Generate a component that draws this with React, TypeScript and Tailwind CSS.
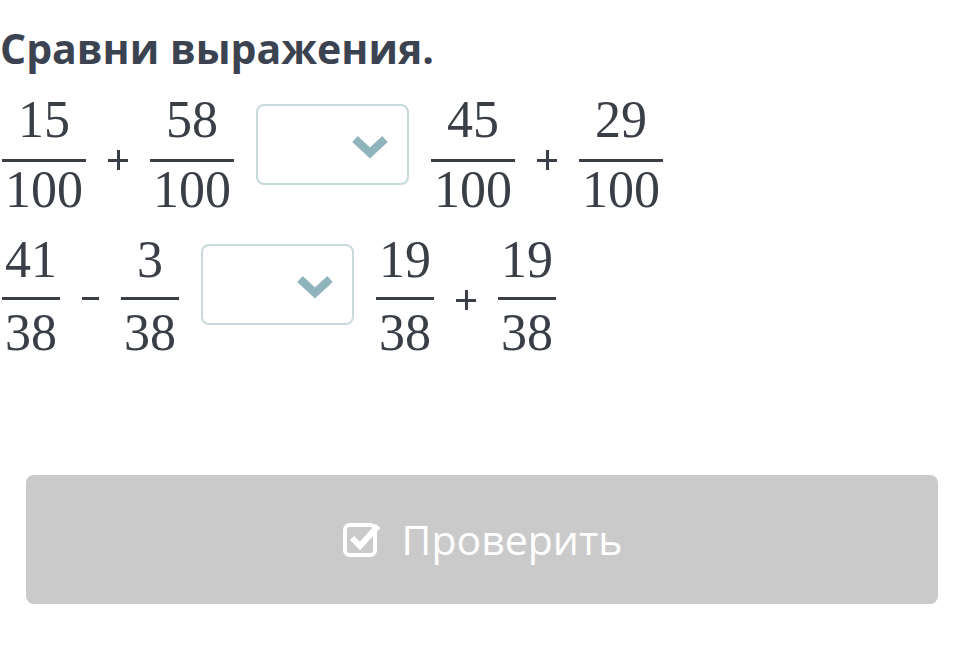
import React from "react";

function Frac({ n, d, numMb = 13, denMt = 2 }: { n: string; d: string; numMb?: number; denMt?: number }) {
  return (
    <div className="flex flex-col items-center shrink-0 text-[52px] leading-[52px] text-[#3a3f47]" style={{ fontFamily: '"Liberation Serif", serif' }}>
      <div className="px-[3px]" style={{ marginBottom: numMb }}>{n}</div>
      <div className="h-[3px] w-full bg-[#3a3f47]" />
      <div className="px-[3px]" style={{ marginTop: denMt }}>{d}</div>
    </div>
  );
}

function Plus() {
  return (
    <div className="relative w-[20px] h-[20px] mt-[56px] shrink-0">
      <div className="absolute left-0 top-[9px] w-[20px] h-[2.5px] bg-[#3a3f47]" />
      <div className="absolute left-[9px] top-0 w-[2.5px] h-[20px] bg-[#3a3f47]" />
    </div>
  );
}

function Minus() {
  return (
    <div className="relative w-[17px] h-[20px] mt-[54px] shrink-0">
      <div className="absolute left-0 top-[9px] w-[17px] h-[3px] bg-[#3a3f47]" />
    </div>
  );
}

function Select() {
  return (
    <div className="shrink-0 mt-[10px] w-[153px] h-[81px] border-2 border-[#c9dadc] rounded-[8px] bg-white flex items-center justify-end pr-[18px] pt-[4px]">
      <svg width="38" height="24" viewBox="0 0 38 24">
        <path d="M4 4 L19 18 L34 4" fill="none" stroke="#8fb4bc" strokeWidth="8" strokeLinecap="butt" strokeLinejoin="miter" />
      </svg>
    </div>
  );
}

export default function App() {
  return (
    <div className="w-[972px] h-[666px] bg-white overflow-hidden" style={{ fontFamily: '"Open Sans", sans-serif' }}>
      <h1 className="pt-[22px] text-[41px] leading-[52px] font-bold text-[#3c4350]">Сравни выражения.</h1>
      <div className="mt-[20px] pl-[2px] flex items-start gap-[22px]">
        <Frac n="15" d="100" />
        <Plus />
        <Frac n="58" d="100" />
        <Select />
        <Frac n="45" d="100" />
        <Plus />
        <Frac n="29" d="100" />
      </div>
      <div className="mt-[18px] pl-[2px] flex items-start gap-[22px]">
        <Frac n="41" d="38" numMb={11} denMt={7} />
        <Minus />
        <Frac n="3" d="38" numMb={11} denMt={7} />
        <Select />
        <Frac n="19" d="38" numMb={11} denMt={7} />
        <Plus />
        <Frac n="19" d="38" numMb={11} denMt={7} />
      </div>
      <div className="mx-[26px] w-[912px] mt-[116px] h-[129px] rounded-[8px] bg-[#cacaca] flex items-center justify-center gap-[20px] text-white">
        <svg width="40" height="38" viewBox="0 0 40 38" className="mb-[2px]">
          <rect x="3" y="5" width="30" height="30" rx="5" fill="none" stroke="white" strokeWidth="4" />
          <path d="M10 18 L18 26 L36 6" fill="none" stroke="white" strokeWidth="6" strokeLinejoin="miter" />
        </svg>
        <span className="text-[41px] leading-none">Проверить</span>
      </div>
    </div>
  );
}
